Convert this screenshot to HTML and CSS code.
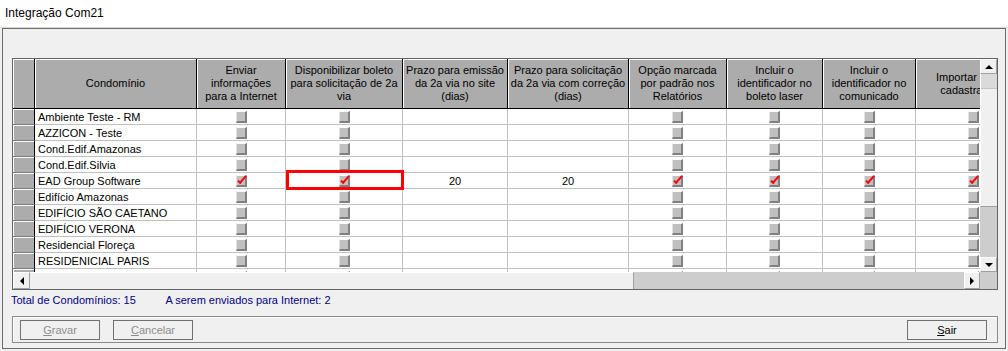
FILE: index.html
```html
<!DOCTYPE html>
<html lang="pt-BR">

<head>
    <meta charset="UTF-8">
    <title>Integração Com21</title>
    <link rel="stylesheet" href="styles.css">
</head>

<body>
    <div class="titlebar">Integração Com21</div>

    <div class="window">
        <div class="grid-frame">
            <div class="grid-main">
                <div class="viewport">
                    <div class="row head">
                        <div class="c sel"></div>
                        <div class="c">Condomínio</div>
                        <div class="c">Enviar<br>informações<br>para a Internet</div>
                        <div class="c">Disponibilizar boleto<br>para solicitação de 2a<br>via</div>
                        <div class="c">Prazo para emissão<br>da 2a via no site<br>(dias)</div>
                        <div class="c">Prazo para solicitação<br>da 2a via com correção<br>(dias)</div>
                        <div class="c">Opção marcada<br>por padrão nos<br>Relatórios</div>
                        <div class="c">Incluir o<br>identificador no<br>boleto laser</div>
                        <div class="c">Incluir o<br>identificador no<br>comunicado</div>
                        <div class="c">Importar dados<br>cadastrais do</div>
                    </div>

                    <div class="row">
                        <div class="c sel"></div>
                        <div class="c name">Ambiente Teste - RM</div>
                        <div class="c"><span class="cb"></span></div>
                        <div class="c"><span class="cb"></span></div>
                        <div class="c"></div>
                        <div class="c"></div>
                        <div class="c"><span class="cb"></span></div>
                        <div class="c"><span class="cb"></span></div>
                        <div class="c"><span class="cb"></span></div>
                        <div class="c"><span class="cb"></span></div>
                    </div>
                    <div class="row">
                        <div class="c sel"></div>
                        <div class="c name">AZZICON - Teste</div>
                        <div class="c"><span class="cb"></span></div>
                        <div class="c"><span class="cb"></span></div>
                        <div class="c"></div>
                        <div class="c"></div>
                        <div class="c"><span class="cb"></span></div>
                        <div class="c"><span class="cb"></span></div>
                        <div class="c"><span class="cb"></span></div>
                        <div class="c"><span class="cb"></span></div>
                    </div>
                    <div class="row">
                        <div class="c sel"></div>
                        <div class="c name">Cond.Edif.Amazonas</div>
                        <div class="c"><span class="cb"></span></div>
                        <div class="c"><span class="cb"></span></div>
                        <div class="c"></div>
                        <div class="c"></div>
                        <div class="c"><span class="cb"></span></div>
                        <div class="c"><span class="cb"></span></div>
                        <div class="c"><span class="cb"></span></div>
                        <div class="c"><span class="cb"></span></div>
                    </div>
                    <div class="row">
                        <div class="c sel"></div>
                        <div class="c name">Cond.Edif.Silvia</div>
                        <div class="c"><span class="cb"></span></div>
                        <div class="c"><span class="cb"></span></div>
                        <div class="c"></div>
                        <div class="c"></div>
                        <div class="c"><span class="cb"></span></div>
                        <div class="c"><span class="cb"></span></div>
                        <div class="c"><span class="cb"></span></div>
                        <div class="c"><span class="cb"></span></div>
                    </div>
                    <div class="row">
                        <div class="c sel"></div>
                        <div class="c name">EAD Group Software</div>
                        <div class="c"><span class="cb on"></span></div>
                        <div class="c hl"><span class="cb on"></span></div>
                        <div class="c">20</div>
                        <div class="c">20</div>
                        <div class="c"><span class="cb on"></span></div>
                        <div class="c"><span class="cb on"></span></div>
                        <div class="c"><span class="cb on"></span></div>
                        <div class="c"><span class="cb on"></span></div>
                    </div>
                    <div class="row">
                        <div class="c sel"></div>
                        <div class="c name">Edifício Amazonas</div>
                        <div class="c"><span class="cb"></span></div>
                        <div class="c"><span class="cb"></span></div>
                        <div class="c"></div>
                        <div class="c"></div>
                        <div class="c"><span class="cb"></span></div>
                        <div class="c"><span class="cb"></span></div>
                        <div class="c"><span class="cb"></span></div>
                        <div class="c"><span class="cb"></span></div>
                    </div>
                    <div class="row">
                        <div class="c sel"></div>
                        <div class="c name">EDIFÍCIO SÃO CAETANO</div>
                        <div class="c"><span class="cb"></span></div>
                        <div class="c"><span class="cb"></span></div>
                        <div class="c"></div>
                        <div class="c"></div>
                        <div class="c"><span class="cb"></span></div>
                        <div class="c"><span class="cb"></span></div>
                        <div class="c"><span class="cb"></span></div>
                        <div class="c"><span class="cb"></span></div>
                    </div>
                    <div class="row">
                        <div class="c sel"></div>
                        <div class="c name">EDIFÍCIO VERONA</div>
                        <div class="c"><span class="cb"></span></div>
                        <div class="c"><span class="cb"></span></div>
                        <div class="c"></div>
                        <div class="c"></div>
                        <div class="c"><span class="cb"></span></div>
                        <div class="c"><span class="cb"></span></div>
                        <div class="c"><span class="cb"></span></div>
                        <div class="c"><span class="cb"></span></div>
                    </div>
                    <div class="row">
                        <div class="c sel"></div>
                        <div class="c name">Residencial Floreça</div>
                        <div class="c"><span class="cb"></span></div>
                        <div class="c"><span class="cb"></span></div>
                        <div class="c"></div>
                        <div class="c"></div>
                        <div class="c"><span class="cb"></span></div>
                        <div class="c"><span class="cb"></span></div>
                        <div class="c"><span class="cb"></span></div>
                        <div class="c"><span class="cb"></span></div>
                    </div>
                    <div class="row">
                        <div class="c sel"></div>
                        <div class="c name">RESIDENICIAL PARIS</div>
                        <div class="c"><span class="cb"></span></div>
                        <div class="c"><span class="cb"></span></div>
                        <div class="c"></div>
                        <div class="c"></div>
                        <div class="c"><span class="cb"></span></div>
                        <div class="c"><span class="cb"></span></div>
                        <div class="c"><span class="cb"></span></div>
                        <div class="c"><span class="cb"></span></div>
                    </div>
                    <div class="row">
                        <div class="c sel"></div>
                        <div class="c name"></div>
                        <div class="c"><span class="cb"></span></div>
                        <div class="c"><span class="cb"></span></div>
                        <div class="c"></div>
                        <div class="c"></div>
                        <div class="c"><span class="cb"></span></div>
                        <div class="c"><span class="cb"></span></div>
                        <div class="c"><span class="cb"></span></div>
                        <div class="c"><span class="cb"></span></div>
                    </div>
                </div>

                <div class="vscroll">
                    <div class="sb-btn"><span class="arrow up"></span></div>
                    <div class="v-thumb"><div class="grip"></div></div>
                    <div class="v-track"></div>
                    <div class="sb-btn"><span class="arrow down"></span></div>
                </div>
            </div>

            <div class="hscroll">
                <div class="sb-btn wide"><span class="arrow left"></span></div>
                <div class="h-thumb"></div>
                <div class="h-track"></div>
                <div class="sb-btn"><span class="arrow right"></span></div>
                <div class="corner"></div>
            </div>
        </div>

        <div class="totals">
            <span class="total">Total de Condomínios: 15</span>
            <span>A serem enviados para Internet: 2</span>
        </div>

        <div class="actions">
            <button disabled><u>G</u>ravar</button>
            <button disabled><u>C</u>ancelar</button>
            <button class="exit"><u>S</u>air</button>
        </div>
    </div>
</body>

</html>
```

FILE: styles.css
```css
body {
    margin: 0;
    width: 1008px;
    height: 351px;
    overflow: hidden;
    background-color: #f0f0f0;
    font-family: "Liberation Sans", Arial, sans-serif;
    font-size: 11px;
    color: #000;
}

.titlebar {
    height: 27px;
    line-height: 27px;
    padding-left: 5px;
    background-color: #fff;
    border-bottom: 1px solid #d9d9d9;
    font-size: 12px;
}

.window {
    box-sizing: border-box;
    width: 1004px;
    height: 321px;
    margin-left: 2px;
    padding: 29px 0 0 9px;
    border: 1px solid #6b6b6b;
}

/* grid */

.grid-frame {
    box-sizing: border-box;
    width: 986px;
    height: 232px;
    border: 1px solid #646464;
    background-color: #fff;
}

.grid-main {
    display: flex;
    height: 213px;
}

.viewport {
    width: 967px;
    overflow: hidden;
}

.row {
    display: grid;
    grid-template-columns: 22px 162px 89px 117px 105px 121px 98px 96px 93px 115px;
    width: max-content;
    height: 16px;
}

.c {
    box-sizing: border-box;
    display: flex;
    align-items: center;
    justify-content: center;
    border-right: 1px solid #c0c0c0;
    border-bottom: 1px solid #c0c0c0;
    white-space: nowrap;
}

.c.name {
    justify-content: flex-start;
    padding-left: 3px;
}

.c.sel {
    background-color: #acacac;
    border-right: 1px solid #000;
    border-bottom: 1px solid #7a7a7a;
    box-shadow: inset 1px 1px 0 #fff;
}

.row.head {
    height: 50px;
}

.head .c {
    background-color: #acacac;
    border-right: 1px solid #000;
    border-bottom: 1px solid #000;
    box-shadow: inset 1px 1px 0 #fff;
    text-align: center;
    line-height: 13px;
}

.c.hl {
    position: relative;
}

.c.hl::after {
    content: "";
    position: absolute;
    left: 0;
    top: -3px;
    width: 118px;
    height: 20px;
    box-sizing: border-box;
    border: 3px solid #f00;
}

.cb {
    position: relative;
    width: 8px;
    height: 9px;
    background-color: #c0c0c0;
    border-top: 1px solid #fff;
    border-left: 1px solid #e3e3e3;
    border-right: 2px solid #808080;
    border-bottom: 2px solid #808080;
}

.cb.on::after {
    content: "";
    position: absolute;
    left: 3px;
    top: -2px;
    width: 2px;
    height: 8px;
    border: solid #f00;
    border-width: 0 2px 2px 0;
    transform: rotate(40deg);
}

/* scrollbars */

.vscroll {
    display: flex;
    flex-direction: column;
    width: 17px;
}

.sb-btn {
    box-sizing: border-box;
    display: flex;
    align-items: center;
    justify-content: center;
    width: 16px;
    height: 15px;
    background-color: #f0f0f0;
    border: 1px solid;
    border-color: #fff #a0a0a0 #a0a0a0 #fff;
}

.vscroll .sb-btn {
    width: 17px;
}

.hscroll .sb-btn {
    height: 17px;
}

.sb-btn.wide {
    width: 17px;
}

.arrow {
    width: 0;
    height: 0;
    border: 4px solid transparent;
}

.arrow.up {
    border-top: 0;
    border-bottom-color: #000;
}

.arrow.down {
    border-bottom: 0;
    border-top-color: #000;
}

.arrow.left {
    border-left: 0;
    border-right-color: #000;
}

.arrow.right {
    border-right: 0;
    border-left-color: #000;
}

.v-thumb {
    box-sizing: border-box;
    height: 133px;
    background-color: #f0f0f0;
    border-left: 1px solid #fff;
    border-bottom: 1px solid #a0a0a0;
}

.grip {
    height: 14px;
    background-color: #dadada;
    border-bottom: 1px solid #c4c4c4;
}

.v-track {
    flex: 1;
    background-color: #cdcdcd;
}

.hscroll {
    display: flex;
    height: 17px;
    border-top: 0;
}

.h-thumb {
    box-sizing: border-box;
    width: 604px;
    background-color: #f0f0f0;
    border-top: 1px solid #fff;
    border-right: 1px solid #a0a0a0;
}

.h-track {
    width: 330px;
    background-color: #cdcdcd;
}

.corner {
    width: 17px;
    background-color: #cdcdcd;
}

/* footer */

.totals {
    height: 21px;
    line-height: 21px;
    margin-left: -1px;
    color: #000080;
}

.totals .total {
    display: inline-block;
    width: 152px;
}

.actions {
    box-sizing: border-box;
    display: flex;
    gap: 13px;
    width: 986px;
    height: 27px;
    margin-top: 5px;
    padding: 3px 10px 0 7px;
    border: 1px solid #8a8a8a;
    box-shadow: inset 1px 1px 0 #fff;
}

.actions button {
    width: 80px;
    height: 20px;
    padding: 0;
    background-color: #f0f0f0;
    border: 1px solid #707070;
    font-family: inherit;
    font-size: 11px;
    color: #000;
}

.actions button:disabled {
    color: #8d8d8d;
}

.actions .exit {
    margin-left: auto;
}
```
